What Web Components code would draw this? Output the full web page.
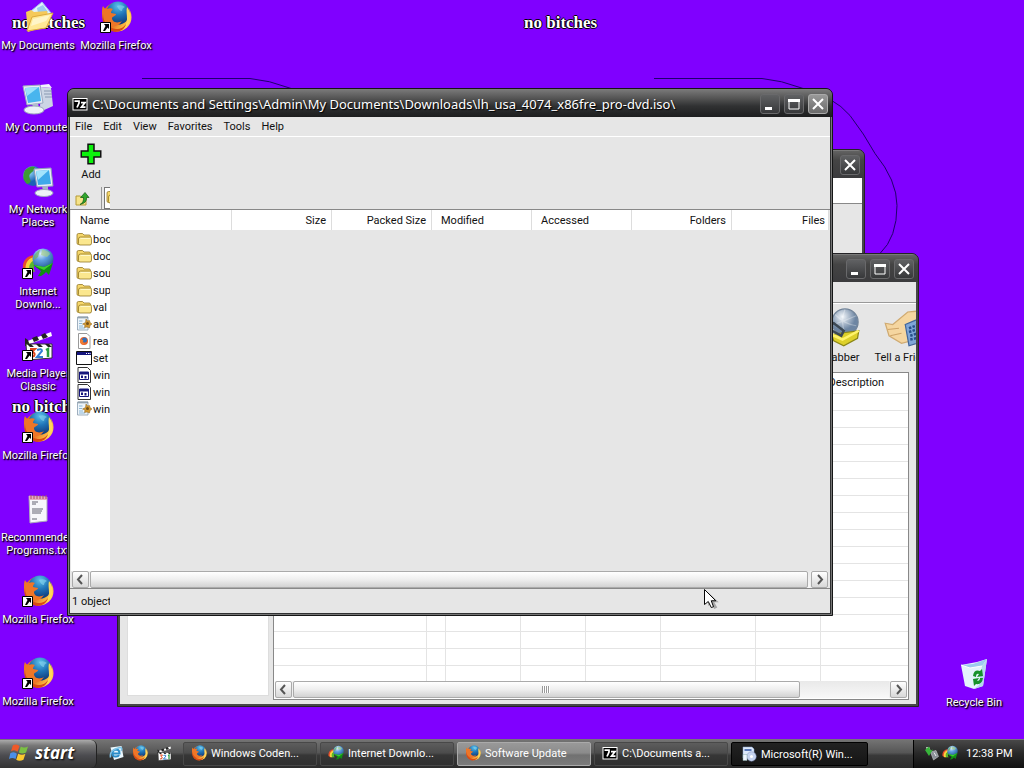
<!DOCTYPE html>
<html lang="en">
<head>
<meta charset="utf-8">
<title>Desktop</title>
<style>
  html, body { margin: 0; height: 100%; }
  body { font: 11px/13px Roboto, "Noto Sans", sans-serif; color: #111; }
  #site { left: 400px; top: 149px; width: 465px; height: 180px; }
  #idm { left: 117px; top: 253px; width: 802px; height: 454px; }
  #zip { left: 67px; top: 88px; width: 766px; height: 528px; }
  #bin { position: absolute; right: 12px; bottom: 0; height: 82px; }
  #pointer { position: absolute; left: 703px; top: 588px; }
</style>
</head>
<body>
<xp-desktop>
  <desk-icon slot="icon" icon="docs" label="My Documents"></desk-icon>
  <desk-icon slot="icon" icon="computer" label="My Computer"></desk-icon>
  <desk-icon slot="icon" icon="network" label="My Network Places"></desk-icon>
  <desk-icon slot="icon" icon="idm" label="Internet Downlo..." shortcut></desk-icon>
  <desk-icon slot="icon" icon="mpc" label="Media Player Classic" shortcut></desk-icon>
  <desk-icon slot="icon" icon="firefox" label="Mozilla Firefox" shortcut></desk-icon>
  <desk-icon slot="icon" icon="text" label="Recommended Programs.txt"></desk-icon>
  <desk-icon slot="icon" icon="firefox" label="Mozilla Firefox" shortcut></desk-icon>
  <desk-icon slot="icon" icon="firefox" label="Mozilla Firefox" shortcut></desk-icon>
  <desk-icon slot="icon" icon="firefox" label="Mozilla Firefox" shortcut></desk-icon>
  <desk-icon id="bin" icon="recycle" label="Recycle Bin"></desk-icon>

  <xp-window id="site" buttons="close"><blank-page></blank-page></xp-window>
  <xp-window id="idm" buttons="min max close"><download-manager></download-manager></xp-window>
  <xp-window id="zip" active icon="7z" buttons="min max close"
    caption="C:\Documents and Settings\Admin\My Documents\Downloads\lh_usa_4074_x86fre_pro-dvd.iso\"><file-manager></file-manager></xp-window>
  <xp-icon id="pointer" name="pointer" size="24"></xp-icon>

  <task-bar slot="bar">
    <xp-icon slot="quick" name="ie" size="16"></xp-icon>
    <xp-icon slot="quick" name="firefox" size="16"></xp-icon>
    <xp-icon slot="quick" name="mpc" size="16"></xp-icon>
    <task-button icon="firefox">Windows Coden...</task-button>
    <task-button icon="idm">Internet Downlo...</task-button>
    <task-button icon="firefox" state="lit">Software Update</task-button>
    <task-button icon="7z">C:\Documents a...</task-button>
    <task-button icon="setup" state="pressed">Microsoft(R) Win...</task-button>
    <xp-icon slot="tray" name="usb" size="16"></xp-icon>
    <xp-icon slot="tray" name="idm" size="16"></xp-icon>
    <span slot="tray">12:38 PM</span>
  </task-bar>
</xp-desktop>

<script>
const ICONS = {
  firefox: `<defs><radialGradient id="a" cx=".5" cy=".2" r=".8"><stop offset="0" stop-color="#5cc0ea"/><stop offset=".5" stop-color="#1f74b8"/><stop offset="1" stop-color="#123a78"/></radialGradient>
    <linearGradient id="b" x1="0" y1="0" x2="1" y2=".6"><stop offset="0" stop-color="#f07a28"/><stop offset=".5" stop-color="#e25a1c"/><stop offset="1" stop-color="#ffd34a"/></linearGradient></defs>
    <circle cx="17" cy="16" r="14.500" fill="url(#b)"/><circle cx="18" cy="12" r="11.500" fill="url(#a)"/>
    <path d="M27 6c4 5 4.500 11 2 16-3 6-8 9-14 8 8-1 12-6 12-12 0-5-1-8 0-12z" fill="#ffd65a"/>
    <path d="M3 5c1 2 2 3 4 3 2-1 4-1 6 0-1 1-2 2-2 4l5 1c0 2-3 2-4 4 0 4 5 6 10 3-3 5-9 7-13 4-6-3-7-8-7-12 0-3 0-5 1-7z" fill="#ee7628"/>
    <path d="M3 13c0 8 5 14 13 15 5 0 8-2 10-5-1 5-6 8-11 8C7 30 1 23 3 13z" fill="#d94a14"/><path d="M17 5q5-2 8 1-3 1-3 4-3 0-5-5z" fill="#8bd6ee" opacity=".6"/>`,
  idm: `<defs><radialGradient id="a" cx=".4" cy=".25" r=".8"><stop offset="0" stop-color="#dff0ff"/><stop offset=".4" stop-color="#5f9fe0"/><stop offset="1" stop-color="#1c4f86"/></radialGradient></defs>
    <path d="M14 8C5 8 0 14 1 22l5 3C5 18 8 13 14 13z" fill="#e84c2c"/><path d="M14 10C7 10 2 16 4 24l5 1c-2-6 0-11 5-11z" fill="#f7d23c"/><path d="M13 13c-5 2-7 6-5 11l5 1c-2-5-1-8 1-10z" fill="#58b82e"/>
    <circle cx="21" cy="12" r="10.500" fill="url(#a)"/><path d="M20 3q6 0 8 4l-3 3-6-2z" fill="#a7d08c" opacity=".7"/><path d="M12 9q3-5 6-6l-2 7-4 3z" fill="#6db55c" opacity=".7"/>
    <path d="M11 18l11 2 9-4-4 12-3-3q-4 5-8 4l3-5z" fill="#0f8f14"/><path d="M11 18l11 2 9-4-9 7z" fill="#3fcf2c"/>`,
  mpc: `<path d="M3 13L29 3l1 4L5 16z" fill="#fff"/><path d="M3 9l3 2 2 6H3zM10 9l5-2 2 4-5 2zM19 6l4-2 3 4-5 2z" fill="#222"/><path d="M4 15h26v14l-25 2z" fill="#fff" stroke="#333"/>
    <path d="M5 15h4l3 3H8zM14 15h4l3 3h-4zM23 15h4l3 3h-4z" fill="#222"/><path d="M8 20h5l-3 3q4 1 2 4l-4 1" fill="none" stroke="#e0491f" stroke-width="2"/>
    <path d="M15 21q5-2 5 1l-5 6h6" fill="none" stroke="#317ed2" stroke-width="2"/><path d="M24 21l2-1v8" fill="none" stroke="#2a9d42" stroke-width="2.500"/>`,
  docs: `<path d="M9 10L20 1l9 11-6 12-12-2z" fill="#e2f1fc" stroke="#9cc6ea"/><path d="M15 7l6-3 5 7-9 6z" fill="#9cc9ef"/><path d="M4 11l5-2 3 2 13-1 3 14-22 7z" fill="#f5c95a"/>
    <path d="M5 30l5-14 21-4-7 15z" fill="#ffe896" stroke="#dca93a"/><path d="M11 18l17-4-4 6-15 5z" fill="#fff5c8"/>`,
  computer: `<path d="M19 4l10 1 2 18-11 5-2-4z" fill="#ccd5e4"/><path d="M19 4l-1-2 9-1 3 4z" fill="#f0f4fa"/><path d="M22 8h8M22 11h8M23 14h7" stroke="#8898b0"/><path d="M1 3l17-1 3 18-16 2z" fill="#e8ecf5" stroke="#9aa8c0"/>
    <path d="M3 5l14-1 2 14-13 2z" fill="#48b5ee"/><path d="M3 5l14-1-12 9z" fill="#9be0fb"/><path d="M10 21l6-1 1 5-5 1z" fill="#b3bdd0"/><ellipse cx="12" cy="27" rx="10" ry="4" fill="#eef2f8" stroke="#9da9bd"/>`,
  network: `<defs><radialGradient id="a" cx=".3" cy=".3"><stop offset="0" stop-color="#9ee2ff"/><stop offset="1" stop-color="#1c62b6"/></radialGradient></defs><circle cx="11" cy="11" r="10" fill="url(#a)"/>
    <path d="M3 5q5-5 10-3-1 4-4 6t-1 6-3 5q-6-5-2-14z" fill="#3d9b35"/><path d="M12 4l17-1 2 18-16 1z" fill="#e8ecf5" stroke="#8d9cba"/><path d="M14 6l13-1 2 14-13 1z" fill="#3ea9ea"/><path d="M14 6l13-1-11 10z" fill="#a3e4fc"/>
    <path d="M20 21h6v5h-5z" fill="#a8b2c8"/><ellipse cx="22" cy="28" rx="9" ry="3.500" fill="#eef2f8" stroke="#9da9bd"/>`,
  text: `<path d="M7 3l18 1v24l-17 2z" fill="#f7f7fc" stroke="#aaa8bd"/><path d="M7 3l18 1v3H7z" fill="#e5adc0"/><path d="M9 2v4M12 2v4M15 2v4M18 2v4M21 2v4M24 2v4" stroke="#b04868"/><path d="M10 9h6M10 11h4M10 16h11M10 18h10M10 20h9M10 26h5" stroke="#636373"/>`,
  recycle: `<path d="M3 7l16-3 10-3-4 27-9 3-9-3z" fill="#e4f3fc"/><path d="M3 7l12-1L29 1l-5 7-12 2z" fill="#9dcaee"/><path d="M24 8l5-7-4 27-9 3 5-4z" fill="#b6d8ee"/><path d="M3 7l9 3 12-2" fill="none" stroke="#fff" stroke-width="1"/>
    <path d="M15 18q1-7 7-5l2-2 1 7-6 1 2-3q-3-1-3 3zM25 20q-1 7-7 6l-2 2-1-7 6-1-2 3q3 0 3-3z" fill="#17922b"/>`,
  ie: `<path d="M5 5L27 2l4 22-19 6z" fill="#eaf7fd"/><path d="M8 17h15q0-8-7-8-7 1-7 8t7 6q5 0 6-3" fill="none" stroke="#2b8cc8" stroke-width="4"/><path d="M5 25Q2 10 24 5q6 0 2 7" fill="none" stroke="#7ec3e8" stroke-width="3"/>`,
  "7z": `<path d="M1 4h30v25H1z" fill="#fff"/><path d="M3 6h26v21H3z" fill="#000"/><path d="M5 10h9v4l-4 9M18 13h8l-7 9h8" fill="none" stroke="#fff" stroke-width="3.500"/>`,
  setup: `<path d="M4 2h18l4 4v18H4z" fill="#dce8fa" stroke="#8ca4d0"/><path d="M7 6h14v4H7z" fill="#5877b8"/><circle cx="21" cy="21" r="9.500" fill="#c6d3ef" stroke="#8391bd"/><circle cx="21" cy="21" r="3" fill="#fff"/><path d="M4 17h8v12H4z" fill="#eef5ff" stroke="#8aa"/>`,
  usb: `<path d="M4 4l7 1 3 9-6 2z" fill="#d7e0d7"/><path d="M13 14l11-3 5 12-10 7z" fill="#8b9198" stroke="#ddd"/><path d="M2 10l8 12 8-13-5 2-3-8z" fill="#37b53a"/><path d="M20 15l4 7" stroke="#eee" stroke-width="2"/>`,
  folder: `<path d="M2 8q0-3 3-3h8l3 3h10q3 0 3 3v16H5q-3 0-3-3z" fill="#f6d76b" stroke="#8d711d" stroke-width="1.500"/><path d="M9 12h20q2 0 2 3v9q0 4-3 4H8q-3 0-3-3v-9q0-4 4-4z" fill="#fbe78e" stroke="#8d711d" stroke-width="1.500"/><path d="M9 15h19" stroke="#fff8c8" stroke-width="2"/>`,
  inf: `<path d="M3 2h21v26H3z" fill="#eef5fb" stroke="#8195a8" stroke-width="1.500"/><path d="M6 1v4M10 1v4M14 1v4M18 1v4M22 1v4" stroke="#456" stroke-width="1.500"/><path d="M6 10h7M6 15h6M6 20h8M6 24h12" stroke="#8bb6d4" stroke-width="2"/><path d="M20 6l3 4 4-1 1 4 4 3-4 3-1 5-5-2-5 1 1-5-5-2 6-3z" fill="#d49a32" stroke="#8a601b"/><circle cx="23" cy="15" r="3" fill="#735018"/>`,
  html: `<path d="M5 1h17l6 6v24H5z" fill="#fff" stroke="#999" stroke-width="2"/><circle cx="16" cy="16" r="8" fill="#e8622c"/><circle cx="17" cy="14" r="5" fill="#3170b8"/><path d="M9 12l6 3-2 4 5 2-5 2-5-5z" fill="#f08034"/>`,
  exe: `<path d="M1 3h30v26H1z" fill="#fff" stroke="#111" stroke-width="2"/><path d="M2 4h28v6H2z" fill="#15157c"/><path d="M20 7h2M24 7h2M27 7h2" stroke="#fff" stroke-width="2"/>`,
  bat: `<path d="M4 1h19l6 6v24H4z" fill="#fff" stroke="#333" stroke-width="2"/><path d="M7 10h18v15H7z" fill="#fff" stroke="#15157c" stroke-width="2"/><path d="M7 10h18v5H7z" fill="#15157c"/><path d="M12 17v5M19 18v5" stroke="#15157c" stroke-width="4"/>`,
  up: `<path d="M2 10h9l3 3h8v15H2z" fill="#f6e388" stroke="#b59a35" stroke-width="2"/><path d="M10 27q8-4 7-14h-6l9-10 8 10h-5q1 11-13 14z" fill="#30a62c" stroke="#175f17" stroke-width="1.500"/>`,
  add: `<path d="M12 3h8v9h9v8h-9v9h-8v-9H3v-8h9z" fill="#0bf30b" stroke="#111" stroke-width="2"/>`,
  grabber: `<defs><radialGradient id="a" cx=".4" cy=".3"><stop offset="0" stop-color="#f3f7fb"/><stop offset="1" stop-color="#6e86a3"/></radialGradient></defs><circle cx="20" cy="12" r="10.500" fill="url(#a)" stroke="#73859a"/><path d="M12 6q8 8 17 9M20 2q-4 9 0 19M11 14q9-3 18-7" fill="none" stroke="#fff" opacity=".3"/>
    <path d="M9 22l22-3-1 6-11 6-8-4z" fill="#ddd02a" stroke="#8b8616"/><path d="M9 22l9 4 13-7" fill="none" stroke="#fff36b" stroke-width="2"/><path d="M6 15l5-2 8 6-2 4-9-5v10" fill="none" stroke="#3c4854" stroke-width="2"/>`,
  friend: `<path d="M1 13l6 1 12-10 11-1v22l-16 4-10-6z" fill="#f5d6a0" stroke="#d0ab72"/><path d="M3 18l9-1M5 23l9-2" stroke="#cfa468"/><path d="M17 14l12-5 4 18-13 4z" fill="#7fa6d8" stroke="#42669b"/><path d="M20 17l8-3M20 20l9-3M21 23l9-3M21 26l9-2" stroke="#28508a" stroke-width="2" stroke-dasharray="2 1"/>`,
  flag: `<path d="M6 5q6-3 10 1l-3 9q-4-4-10-1z" fill="#ef5a2a"/><path d="M18 7q5 3 11 0l-3 9q-6 3-11 0z" fill="#7bc043"/><path d="M2 17q6-3 10 1l-2 8q-5-3-10 0z" fill="#4a8fe8"/><path d="M14 18q6 3 11 0l-3 9q-6 3-11 0z" fill="#fbc92e"/>`,
  pointer: `<path d="M7 6v18l4-4 4 8 4-2-4-7h6z" fill="#666" opacity=".5"/><path d="M2 2v20l5-4 4 8 3-1-3-8h6z" fill="#fff" stroke="#000" stroke-width="1.300"/>`
};

const define = (name, css, html) => {
  const make = typeof html === 'function' ? html : () => html;
  customElements.define(name, class extends HTMLElement {
    constructor() { super(); this.attachShadow({ mode: 'open' }); }
    connectedCallback() { this.shadowRoot.innerHTML = `<style>${css}</style>` + make(this); }
  });
};

define('xp-icon', `:host{display:block;flex:none;line-height:0} svg{display:block}`,
  el => { const s = el.getAttribute('size') || 32; return `<svg width="${s}" height="${s}" viewBox="0 0 32 32" aria-hidden="true">${ICONS[el.getAttribute('name')]}</svg>`; });

define('xp-desktop', `
  :host{display:flex;flex-direction:column;height:100vh;overflow:hidden}
  main{flex:1;min-height:0;position:relative;overflow:hidden;background:#8000ff}
  .paper{position:absolute;inset:0;display:grid;grid-template-columns:512px 512px;grid-auto-rows:384px;overflow:hidden}
  .icons{display:grid;grid-auto-flow:column;grid-template-rows:repeat(9,82px);grid-auto-columns:78px;position:relative}`,
  `<main><div class="paper"><wall-tile></wall-tile><wall-tile></wall-tile><wall-tile></wall-tile><wall-tile></wall-tile></div>
   <div class="icons"><slot name="icon"></slot></div><slot></slot></main><slot name="bar"></slot>`);

define('wall-tile', `
  :host{display:block;position:relative}
  svg{display:block} p{position:absolute;left:12px;top:13px;margin:0;font:bold 17px/20px "Liberation Serif",serif;color:#fff;text-shadow:-1px 0 #000,1px 0 #000,0 1px #000,0 -1px #000;white-space:nowrap}`,
  `<svg width="512" height="384" fill="none" stroke="#20006c"><path d="M142 78.500h108q20 2 38 9 34 9 50 28 14 18 25 38 22 27 22 52 0 32-17 48"/></svg><p>no bitches</p>`);

define('desk-icon', `
  :host{display:block;width:76px}
  button{all:unset;box-sizing:border-box;width:100%;padding:1px 0 0;display:flex;flex-direction:column;align-items:center;gap:6px;color:#fff;text-align:center;text-shadow:1px 1px 1px #000,1px 1px 2px #000}
  .pic{position:relative} .pic svg{position:absolute;left:0;bottom:0}
  span{max-width:76px}`,
  el => `<button><div class="pic"><xp-icon name="${el.getAttribute('icon')}" size="32"></xp-icon>${el.hasAttribute('shortcut') ? '<svg width="11" height="11"><path d="M.5.5h10v10H.5z" fill="#fff" stroke="#000"/><path d="M4 2h5v5L7.500 5.500 5 9H3l2.500-5z"/></svg>' : ''}</div><span>${el.getAttribute('label')}</span></button>`);

const SIGNS = {
  min: '<path d="M4 12h7v3H4z" fill="#fff"/>',
  max: '<path d="M4 5h10v9H4z" fill="none" stroke="#fff"/><path d="M3 4h12v3H3z" fill="#fff"/>',
  close: '<path d="M4 4l10 10M14 4L4 14" stroke="#fff" stroke-width="2"/>'
};
define('xp-window', `
  :host{position:absolute;box-sizing:border-box;display:flex;flex-direction:column;background:#474649;border:1px solid #242326;border-radius:7px 7px 0 0;padding:0 2px 2px;overflow:hidden}
  :host([active]){background:#303132;border-color:#151616;box-shadow:inset 0 0 0 1px #777}
  header{height:28px;flex:none;margin:0 -2px;padding:0 4px;display:flex;align-items:center;gap:4px;background:linear-gradient(#626262,#444 35%,#3b3b3d);color:#fff;border-top:1px solid #7a7a7a;box-sizing:border-box}
  :host([active]) header{background:linear-gradient(#777,#555 30%,#303132 60%,#1d1e1f)}
  h1{flex:1;margin:0;font:13px/18px "Noto Sans",sans-serif;white-space:nowrap;text-shadow:1px 1px 1px #000}
  button{all:unset;box-sizing:border-box;width:20px;height:20px;border:1px solid #69696b;border-radius:3px;background:linear-gradient(#606163,#37383a);flex:none}
  button svg{display:block}
  .buttons{display:flex;gap:4px}
  :host([active]) .close{background:linear-gradient(#999,#6b6b6b);border-color:#aaa}
  .body{flex:1;min-height:0;overflow:hidden;background:#e6e6e6;display:flex;flex-direction:column}`,
  el => `<header>${el.getAttribute('icon') ? `<xp-icon name="${el.getAttribute('icon')}" size="16"></xp-icon>` : ''}<h1>${el.getAttribute('caption') || ''}</h1><div class="buttons">${el.getAttribute('buttons').split(' ').map(b => `<button class="${b}" aria-label="${b}"><svg width="18" height="18">${SIGNS[b]}</svg></button>`).join('')}</div></header><div class="body"><slot></slot></div>`);

define('blank-page', `:host{display:block;background:#e6e6e6} div{height:25px;background:#fff;border-bottom:1px solid #888}`, `<div></div>`);

define('xp-scrollbar', `
  :host{display:flex;height:17px;flex:none;background:#efefef;gap:1px}
  button{all:unset;box-sizing:border-box;width:17px;height:17px;border:1px solid #aaa;border-radius:2px;background:linear-gradient(#fff,#d8d8d8);flex:none}
  svg{display:block}
  .track{flex:1;display:flex;background:linear-gradient(#e9e9e9,#f8f8f8)}
  .thumb{box-sizing:border-box;width:var(--thumb,100%);border:1px solid #aaa;border-radius:2px;background:linear-gradient(#fff,#eee 50%,#d2d2d2);display:flex;align-items:center;justify-content:center}
  i{width:8px;height:7px;background:repeating-linear-gradient(90deg,#999 0 1px,#fff 1px 2px)}`,
  el => `<button aria-label="Scroll left"><svg width="15" height="15"><path d="M9 3L5 7.500 9 12" fill="none" stroke="#555" stroke-width="2"/></svg></button><div class="track"><div class="thumb">${el.hasAttribute('grip') ? '<i></i>' : ''}</div></div><button aria-label="Scroll right"><svg width="15" height="15"><path d="M6 3l4 4.500L6 12" fill="none" stroke="#555" stroke-width="2"/></svg></button>`);

const FILES = [['folder','boo'],['folder','doc'],['folder','sou'],['folder','sup'],['folder','val'],['inf','aut'],['html','rea'],['exe','set'],['bat','win'],['bat','win'],['inf','win']];
define('file-manager', `
  :host{flex:1;display:flex;flex-direction:column;min-height:0}
  button{all:unset;white-space:nowrap}
  nav{display:flex;gap:11px;height:18px;padding:0 5px 1px;align-items:center;border-bottom:1px solid #fff;flex:none;box-sizing:content-box}
  .tools{height:48px;padding:0 9px 2px;display:flex;align-items:center;flex:none}
  .tools button{display:flex;flex-direction:column;align-items:center;gap:2px}
  .path{height:22px;width:40px;display:flex;overflow:hidden;flex:none;box-sizing:border-box}
  .path button{width:32px;padding:1px 0 0 5px;flex:none;box-sizing:border-box;border-right:1px solid #999}
  .path div{margin:0 0 0 2px;border:1px solid #777;background:#fff;padding:1px;width:60px;flex:none}
  .list{flex:1;min-height:0;border-top:1px solid #888;padding:0 1px;overflow:hidden}
  table{border-collapse:collapse;table-layout:fixed;width:100%}
  th{height:20px;padding:0 6px 0 9px;font-weight:400;text-align:left;background:linear-gradient(#ddd,#ddd) right/1px 100% no-repeat #fff}
  th.n{text-align:right} th:last-child{padding-right:4px}
  td{padding:0;height:17px}
  .name{display:flex;align-items:center;gap:1px;height:17px;width:34px;padding-left:5px;overflow:hidden;background:#fff;white-space:nowrap}
  .rows{display:grid;grid-template-rows:auto 1fr;height:100%}
  .rest{width:39px;background:#fff}
  .status{height:23px;flex:none;border-top:1px solid #888;padding:1px 0 0 2px;display:flex;align-items:center}
  .status span{width:38px;overflow:hidden;white-space:nowrap}
  xp-scrollbar{margin:0 2px 0 2px;--thumb:718px}
  .name span{padding-top:2px}`,
  `<nav>${['File','Edit','View','Favorites','Tools','Help'].map(t => `<button>${t}</button>`).join('')}</nav>
   <div class="tools"><button><xp-icon name="add" size="24"></xp-icon>Add</button></div>
   <div class="path"><button aria-label="Up"><xp-icon name="up" size="16"></xp-icon></button><div><xp-icon name="folder" size="16"></xp-icon></div></div>
   <div class="list"><div class="rows"><table>
     <colgroup><col style="width:161px"><col span="5" style="width:100px"><col></colgroup>
     <thead><tr><th>Name</th><th class="n">Size</th><th class="n">Packed Size</th><th>Modified</th><th>Accessed</th><th class="n">Folders</th><th class="n">Files</th></tr></thead>
     <tbody>${FILES.map(f => `<tr><td><div class="name"><xp-icon name="${f[0]}" size="16"></xp-icon><span>${f[1]}</span></div></td></tr>`).join('')}</tbody></table><div class="rest"></div></div></div>
   <xp-scrollbar></xp-scrollbar><div class="status"><span>1 object</span></div>`);

define('download-manager', `
  :host{flex:1;display:flex;flex-direction:column;min-height:0}
  .menu{height:20px;border-bottom:1px solid #999;box-shadow:0 1px #fff;flex:none}
  .tools{height:69px;display:flex;justify-content:flex-end;flex:none;overflow:hidden}
  .tools button{all:unset;box-sizing:border-box;width:64px;flex:none;display:flex;flex-direction:column;align-items:center;gap:4px;padding-top:4px;white-space:nowrap}
  .tools button:last-child{margin-right:-20px}
  .panes{flex:1;min-height:0;display:flex;gap:4px;padding:0 7px 4px}
  .tree{width:140px;background:#fff;border:1px solid #ddd;margin-bottom:4px}
  .grid{flex:1;min-width:0;border:1px solid #888;background:#fff;display:flex;flex-direction:column;overflow:hidden}
  table{border-collapse:collapse;table-layout:fixed;width:100%;flex:none}
  th,td{box-sizing:border-box;padding:0;border-right:1px solid #e4e4e4;border-bottom:1px solid #e4e4e4;font-weight:400}
  th{height:20px;padding-left:8px;text-align:left} td{height:17px} th:last-child,td:last-child{border-right:0}
  tbody tr:last-child td{border-bottom:0;height:16px}
  xp-scrollbar{margin:0 1px}`,
  `<div class="menu"></div><div class="tools"><button><xp-icon name="grabber" size="40"></xp-icon>Grabber</button><button><xp-icon name="friend" size="40"></xp-icon>Tell a Friend</button></div>
   <div class="panes"><div class="tree"></div><div class="grid"><table>
   <colgroup>${[152,19,75,65,75,95,65].map(w => `<col style="width:${w}px">`).join('')}<col></colgroup>
   <thead><tr>${'<th></th>'.repeat(7)}<th>Description</th></tr></thead><tbody>${('<tr>' + '<td></td>'.repeat(8) + '</tr>').repeat(17)}</tbody></table>
   <xp-scrollbar grip style="--thumb:85%"></xp-scrollbar></div></div>`);

define('task-bar', `
  :host{flex:none;display:flex;height:29px;box-sizing:border-box;border-top:1px solid #777;background:linear-gradient(#737373,#565656 45%,#393939 55%,#2c2c2c);color:#fff}
  .start{all:unset;box-sizing:border-box;width:97px;padding:0 0 3px 9px;display:flex;align-items:center;gap:5px;font:italic bold 17px/24px "Open Sans",sans-serif;text-shadow:1px 1px 2px #000;background:linear-gradient(#aaa,#777 20%,#4c4c50 55%,#333);border-radius:0 6px 6px 0;border-right:1px solid #222}
  .quick{display:flex;align-items:center;gap:8px;width:75px;padding-left:11px;padding-bottom:2px}
  .tasks{flex:1;display:flex;gap:3px;padding:2px 0;min-width:0}
  .tray{box-sizing:border-box;width:111px;display:flex;align-items:center;gap:2px;padding:0 0 2px 10px;border-left:1px solid #000;background:linear-gradient(#484848,#272727 50%,#111);white-space:nowrap}
  ::slotted(span){margin-left:6px}`,
  `<button class="start"><xp-icon name="flag" size="21"></xp-icon>start</button><div class="quick"><slot name="quick"></slot></div><div class="tasks"><slot></slot></div><div class="tray"><slot name="tray"></slot></div>`);

define('task-button', `
  :host{display:block;flex:0 1 134px;min-width:0}
  :host([state=pressed]){flex-basis:137px}
  button{all:unset;box-sizing:border-box;width:100%;height:100%;display:flex;align-items:center;gap:4px;padding:0 7px 2px;border:1px solid #484848;border-radius:2px;background:linear-gradient(#5d5d5d,#4c4c4c 45%,#363636 55%,#303030);white-space:nowrap;overflow:hidden}
  :host([state=lit]) button{background:linear-gradient(#999,#8b8b8b 45%,#717171 55%,#7b7b7b);border-color:#aaa}
  :host([state=pressed]) button{background:linear-gradient(#222,#151515);border-color:#000;padding:0 9px}`,
  el => `<button><xp-icon name="${el.getAttribute('icon')}" size="16"></xp-icon><slot></slot></button>`);
</script>
</body>
</html>
